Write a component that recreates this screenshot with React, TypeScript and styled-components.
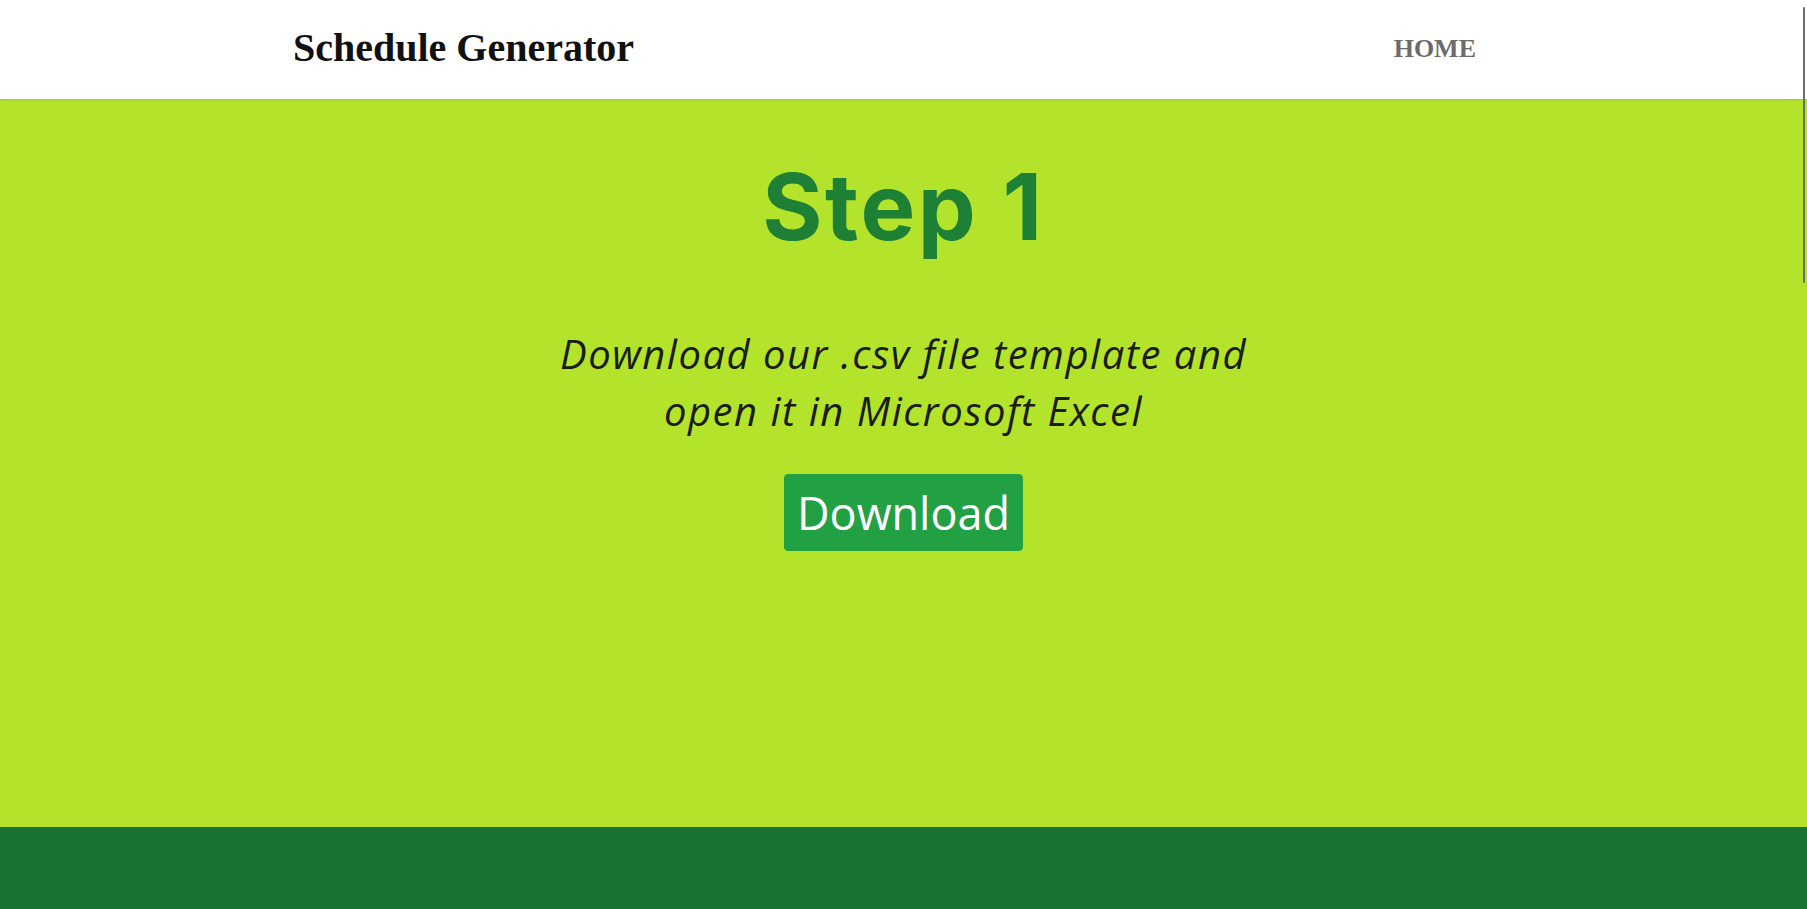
import React from "react";
import styled, { createGlobalStyle } from "styled-components";

const GlobalStyle = createGlobalStyle`
  html, body {
    margin: 0;
    padding: 0;
    background: #1a7431;
  }
  body {
    font-family: "Liberation Serif", serif;
    overflow: hidden;
  }
  * { box-sizing: border-box; }
`;

const Page = styled.div`
  display: flex;
  flex-direction: column;
  min-height: 909px;
`;

const Header = styled.header`
  height: 99px;
  background: #ffffff;
  display: flex;
  align-items: center;
  justify-content: space-between;
  padding: 0 331px 0 293px;
  box-shadow: 0 1px 2px rgba(0, 0, 0, 0.12);
  position: relative;
  z-index: 1;
`;

const Brand = styled.a`
  font-family: "Liberation Serif", "Times New Roman", serif;
  font-weight: 700;
  font-size: 40px;
  color: #111;
  text-decoration: none;
  line-height: 1;
  padding-bottom: 4px;
`;

const NavLink = styled.a`
  font-family: "Liberation Serif", "Times New Roman", serif;
  font-weight: 700;
  font-size: 26px;
  color: #6b6b6b;
  text-decoration: none;
  line-height: 1;
  padding-bottom: 2px;
`;

const Hero = styled.section`
  height: 728px;
  background: #b3e42b;
  display: flex;
  flex-direction: column;
  align-items: center;
  padding-top: 48px;
`;

const Title = styled.h1`
  margin: 0;
  font-family: "Inter", "Open Sans", sans-serif;
  font-weight: 700;
  font-size: 92px;
  line-height: 120px;
  letter-spacing: 2.5px;
  color: #1e8035;
`;

const Lead = styled.p`
  margin: 58px 0 0;
  max-width: 740px;
  text-align: center;
  font-family: "Open Sans", sans-serif;
  font-style: italic;
  font-size: 40px;
  line-height: 57px;
  letter-spacing: 1.5px;
  color: #1b1d12;
`;

const DownloadButton = styled.button`
  margin-top: 35px;
  height: 77px;
  padding: 0 12px;
  border: 1px solid #22a044;
  border-radius: 4px;
  background: #22a044;
  color: #ffffff;
  font-family: "Open Sans", sans-serif;
  font-size: 45px;
  line-height: 1;
  cursor: pointer;
`;

const Footer = styled.footer`
  flex: 1;
  background: #1a7431;
`;

const ScrollThumb = styled.div`
  position: fixed;
  top: 7px;
  right: 2px;
  width: 2px;
  height: 276px;
  background: #6d6d6d;
  border-radius: 1px;
  z-index: 10;
`;

export default function App() {
  return (
    <>
      <GlobalStyle />
      <Page>
        <Header>
          <Brand href="#">Schedule Generator</Brand>
          <NavLink href="#">HOME</NavLink>
        </Header>
        <Hero>
          <Title>Step 1</Title>
          <Lead>Download our .csv file template and open it in Microsoft Excel</Lead>
          <DownloadButton>Download</DownloadButton>
        </Hero>
        <Footer />
      </Page>
      <ScrollThumb />
    </>
  );
}
